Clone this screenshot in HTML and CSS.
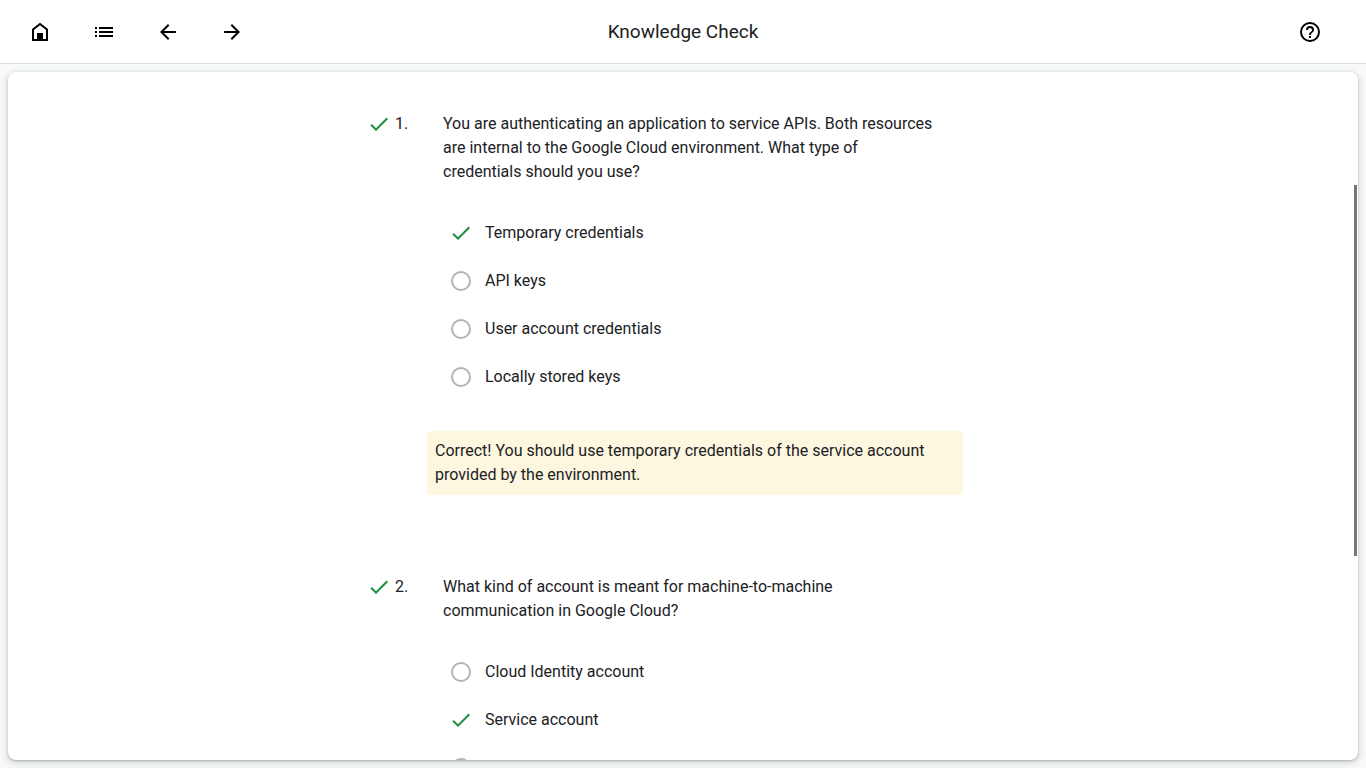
FILE: index.html
```html
<!DOCTYPE html>
<html lang="en">
<head>
<meta charset="utf-8">
<meta name="viewport" content="width=device-width, initial-scale=1">
<title>Knowledge Check</title>
<link rel="stylesheet" href="styles.css">
</head>
<body class="app">
<header class="toolbar">
  <nav class="toolbar-nav" aria-label="Course">
    <button class="icon-button" type="button" aria-label="Home"><svg class="icon" viewBox="0 0 24 24"><path d="M5 20V9.400L12 4l7 5.400V20z" fill="none" stroke="currentColor" stroke-width="2"/><path d="M9 13h6v7H9z"/></svg></button>
    <button class="icon-button" type="button" aria-label="Contents"><svg class="icon" viewBox="0 0 24 24"><path d="M7 7h14v2H7zM7 11h14v2H7zM7 15h14v2H7zM3 7h2v2H3zM3 11h2v2H3zM3 15h2v2H3z"/></svg></button>
    <button class="icon-button" type="button" aria-label="Previous"><svg class="icon" viewBox="0 0 24 24"><path d="M20 11H7.830l5.590-5.590L12 4l-8 8 8 8 1.410-1.410L7.830 13H20z"/></svg></button>
    <button class="icon-button" type="button" aria-label="Next"><svg class="icon" viewBox="0 0 24 24"><path d="M12 4l-1.410 1.410L16.170 11H4v2h12.170l-5.580 5.590L12 20l8-8z"/></svg></button>
  </nav>
  <h1 class="title">Knowledge Check</h1>
  <div class="toolbar-end">
    <button class="icon-button" type="button" aria-label="Help"><svg class="icon" viewBox="0 0 24 24"><path d="M11 18h2v-2h-2zm1-16a10 10 0 1 0 0 20 10 10 0 0 0 0-20zm0 18a8 8 0 1 1 0-16 8 8 0 0 1 0 16zm0-14a4 4 0 0 0-4 4h2a2 2 0 1 1 4 0c0 2-3 1.750-3 5h2c0-2.250 3-2.500 3-5a4 4 0 0 0-4-4z"/></svg></button>
  </div>
</header>
<main class="card">
  <div class="quiz">
    <section class="question">
      <svg class="check" viewBox="0 0 24 24" role="img" aria-label="Correct"><path d="M9 16.170L4.830 12l-1.420 1.410L9 19 21 7l-1.410-1.410z"/></svg>
      <span class="number">1.</span>
      <div class="body">
        <p class="prompt" id="q1">You are authenticating an application to service APIs. Both resources are internal to the Google Cloud environment. What type of credentials should you use?</p>
        <div class="options" role="radiogroup" aria-labelledby="q1">
          <label class="option"><span class="mark"><input class="radio" type="radio" name="q1" checked><svg class="tick" viewBox="0 0 24 24"><path d="M9 16.170L4.830 12l-1.420 1.410L9 19 21 7l-1.410-1.410z"/></svg></span>Temporary credentials</label>
          <label class="option"><span class="mark"><input class="radio" type="radio" name="q1"></span>API keys</label>
          <label class="option"><span class="mark"><input class="radio" type="radio" name="q1"></span>User account credentials</label>
          <label class="option"><span class="mark"><input class="radio" type="radio" name="q1"></span>Locally stored keys</label>
        </div>
        <p class="feedback">Correct! You should use temporary credentials of the service account provided by the environment.</p>
      </div>
    </section>
    <section class="question">
      <svg class="check" viewBox="0 0 24 24" role="img" aria-label="Correct"><path d="M9 16.170L4.830 12l-1.420 1.410L9 19 21 7l-1.410-1.410z"/></svg>
      <span class="number">2.</span>
      <div class="body">
        <p class="prompt" id="q2">What kind of account is meant for machine-to-machine communication in Google Cloud?</p>
        <div class="options" role="radiogroup" aria-labelledby="q2">
          <label class="option"><span class="mark"><input class="radio" type="radio" name="q2"></span>Cloud Identity account</label>
          <label class="option"><span class="mark"><input class="radio" type="radio" name="q2" checked><svg class="tick" viewBox="0 0 24 24"><path d="M9 16.170L4.830 12l-1.420 1.410L9 19 21 7l-1.410-1.410z"/></svg></span>Service account</label>
          <label class="option"><span class="mark"><input class="radio" type="radio" name="q2" aria-label="Third option"></span></label>
        </div>
      </div>
    </section>
  </div>
  <div class="scroll-thumb"></div>
</main>
</body>
</html>
```
FILE: styles.css
```css
* { box-sizing: border-box; }
.app {
  display: flex;
  flex-direction: column;
  height: 100vh;
  margin: 0;
  background: #f8f9fa;
  color: #202124;
  font: 16px/24px Roboto, sans-serif;
}
.toolbar {
  display: grid;
  grid-template-columns: 1fr auto 1fr;
  align-items: center;
  flex: none;
  height: 64px;
  padding: 0 32px 0 16px;
  background: #fff;
  border-bottom: 1px solid #dadce0;
}
.toolbar-nav { display: flex; gap: 16px; }
.toolbar-end { display: flex; justify-content: flex-end; }
.title {
  margin: 0 0 0 16px;
  font: 400 19px/24px Roboto, sans-serif;
}
.icon-button {
  display: grid;
  place-items: center;
  width: 48px;
  height: 48px;
  padding: 0;
  border: 0;
  background: none;
  color: #000;
}
.icon { width: 24px; height: 24px; fill: currentColor; }
.card {
  position: relative;
  flex: 1;
  min-height: 0;
  margin: 8px;
  overflow: hidden;
  background: #fff;
  border-radius: 8px;
  box-shadow: 0 1px 2px rgba(60, 64, 67, .3), 0 2px 6px 2px rgba(60, 64, 67, .15);
}
.quiz {
  max-width: 632px;
  margin: 0 auto;
  padding: 40px 36px 0 0;
}
.question {
  display: grid;
  grid-template-columns: 28px 32px 1fr;
  margin-bottom: 80px;
}
.check, .tick { width: 24px; height: 24px; fill: #1e8e3e; }
.prompt { margin: 0 0 25px; padding: 0 28px 0 16px; }
.options { padding-left: 22px; }
.option {
  display: flex;
  align-items: center;
  gap: 12px;
  height: 48px;
}
.mark {
  display: grid;
  place-items: center;
  width: 24px;
  height: 24px;
}
.radio, .tick { grid-area: 1 / 1; }
.radio {
  appearance: none;
  width: 20px;
  height: 20px;
  margin: 0;
  border: 2px solid #b4b4b4;
  border-radius: 50%;
}
.radio:checked { border-color: transparent; }
.feedback {
  margin: 30px 0 0;
  padding: 8px;
  background: #fef7e0;
  border-radius: 4px;
}
.scroll-thumb {
  position: absolute;
  top: 16.4%;
  right: 1px;
  width: 3px;
  height: 54%;
  background: #757575;
}
```
